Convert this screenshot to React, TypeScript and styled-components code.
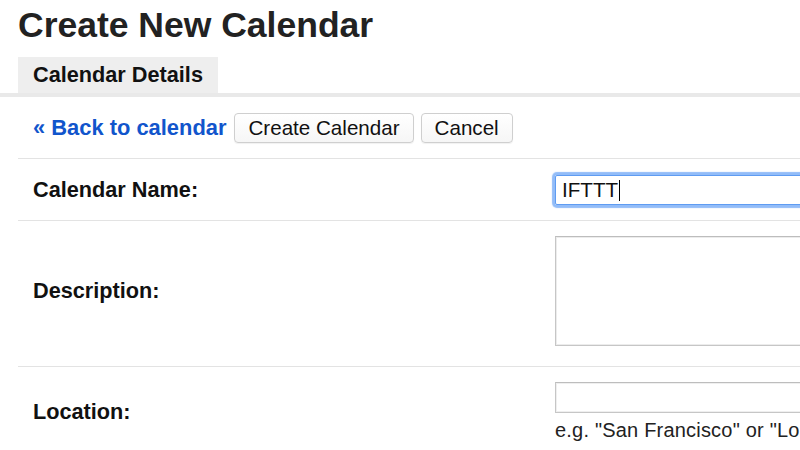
import React from "react";
import styled, { createGlobalStyle } from "styled-components";

const GlobalStyle = createGlobalStyle`
  html, body {
    margin: 0;
    padding: 0;
    background: #ffffff;
    overflow: hidden;
  }
  body {
    font-family: "Liberation Sans", Arial, Helvetica, sans-serif;
    color: #222222;
  }
`;

const Page = styled.div`
  width: 1100px;
`;

const Title = styled.h1`
  margin: 0;
  padding: 4px 0 0 18px;
  height: 53px;
  font-size: 35.5px;
  line-height: 42px;
  font-weight: bold;
  color: #222222;
`;

const TabStrip = styled.div`
  display: flex;
  padding-left: 18px;
  border-bottom: 4px solid #e9e9e9;
`;

const Tab = styled.div`
  background: #eeeeee;
  padding: 0 15px;
  height: 36px;
  line-height: 36px;
  font-size: 21.7px;
  font-weight: bold;
  color: #111111;
`;

const Content = styled.div`
  margin-left: 18px;
`;

const Toolbar = styled.div`
  display: flex;
  align-items: center;
  gap: 8px;
  height: 61px;
  padding-left: 15px;
  border-bottom: 1px solid #e3e3e3;
`;

const BackLink = styled.a`
  font-size: 21.9px;
  font-weight: bold;
  color: #1155cc;
  text-decoration: none;
  cursor: pointer;
`;

const Buttons = styled.div`
  display: flex;
  gap: 7px;
`;

const Button = styled.button`
  height: 30px;
  padding: 0 13px;
  border: 1px solid #cfcfcf;
  border-radius: 4px;
  background: linear-gradient(#ffffff, #f6f6f6);
  box-shadow: 0 1px 1px rgba(0, 0, 0, 0.06);
  font-family: "Liberation Sans", Arial, Helvetica, sans-serif;
  font-size: 20.6px;
  color: #111111;
  line-height: 28px;
`;

const Row = styled.div<{ $pad: string }>`
  display: grid;
  grid-template-columns: 537px 1fr;
  align-items: center;
  padding: ${(p) => p.$pad};
  border-bottom: 1px solid #e3e3e3;
`;

const Label = styled.div`
  padding-left: 15px;
  font-size: 21.7px;
  font-weight: bold;
  color: #111111;
  line-height: 26px;
`;

const Field = styled.div`
  display: flex;
  flex-direction: column;
`;

const FocusedInput = styled.div`
  box-sizing: border-box;
  width: 420px;
  height: 30px;
  padding: 0 6px;
  border: 1px solid #5f9cf2;
  border-radius: 2px;
  box-shadow: 0 0 1px 3px rgba(110, 165, 245, 0.75);
  display: flex;
  align-items: center;
  font-size: 20.6px;
  color: #111111;
`;

const Caret = styled.span`
  display: inline-block;
  width: 1px;
  height: 21px;
  margin-left: 1px;
  background: #000000;
`;

const TextArea = styled.textarea`
  display: block;
  box-sizing: border-box;
  width: 420px;
  height: 110px;
  margin: 0;
  border: 1px solid #c6c6c6;
  border-top-color: #bdbdbd;
  box-shadow: inset 0 0 0 1px #ececec;
  resize: none;
  font-family: "Liberation Sans", Arial, Helvetica, sans-serif;
`;

const TextInput = styled.input`
  display: block;
  box-sizing: border-box;
  width: 420px;
  height: 31px;
  margin: 0;
  border: 1px solid #c6c6c6;
  border-top-color: #bdbdbd;
  box-shadow: inset 0 0 0 1px #efefef;
  font-family: "Liberation Sans", Arial, Helvetica, sans-serif;
  font-size: 20px;
`;

const Hint = styled.div`
  margin-top: 6px;
  font-size: 20px;
  letter-spacing: 0.2px;
  line-height: 22px;
  color: #222222;
  white-space: nowrap;
`;

export default function App() {
  return (
    <Page>
      <GlobalStyle />
      <Title>Create New Calendar</Title>
      <TabStrip>
        <Tab>Calendar Details</Tab>
      </TabStrip>
      <Content>
        <Toolbar>
          <BackLink>« Back to calendar</BackLink>
          <Buttons>
            <Button>Create Calendar</Button>
            <Button>Cancel</Button>
          </Buttons>
        </Toolbar>
        <Row $pad="16px 0 15px">
          <Label>Calendar Name:</Label>
          <Field>
            <FocusedInput>
              IFTTT
              <Caret />
            </FocusedInput>
          </Field>
        </Row>
        <Row $pad="15px 0 20px">
          <Label>Description:</Label>
          <Field>
            <TextArea />
          </Field>
        </Row>
        <Row $pad="15px 0 15px">
          <Label>Location:</Label>
          <Field>
            <TextInput />
            <Hint>e.g. "San Francisco" or "London"</Hint>
          </Field>
        </Row>
      </Content>
    </Page>
  );
}
